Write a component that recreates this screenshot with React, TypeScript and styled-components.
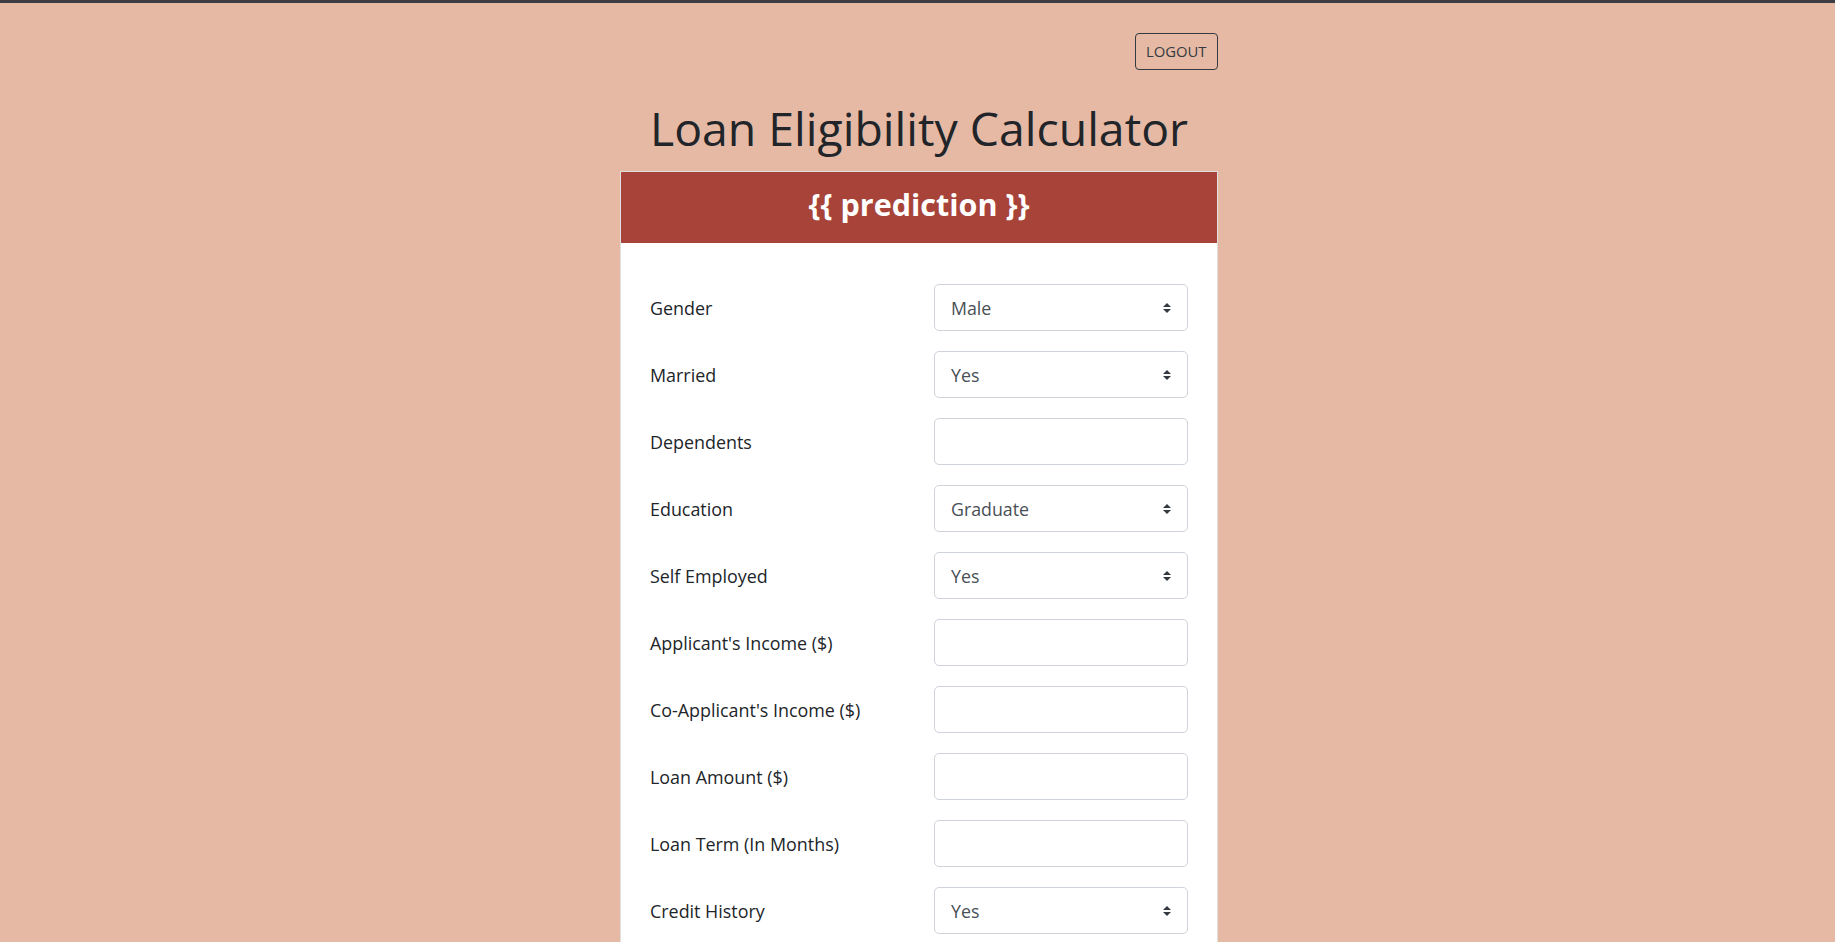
import React from "react";
import styled, { createGlobalStyle } from "styled-components";

const GlobalStyle = createGlobalStyle`
  html, body {
    margin: 0;
    padding: 0;
  }
  body {
    background: #e6b9a4;
    font-family: "Open Sans", "Noto Sans", Arial, sans-serif;
    color: #212529;
  }
  * { box-sizing: border-box; }
`;

const TopStrip = styled.div`
  height: 3px;
  background: #3b3d42;
`;

const Page = styled.main`
  width: 601px;
  padding-left: 3px;
  margin: 0 auto;
  display: flex;
  flex-direction: column;
`;

const HeaderBar = styled.div`
  display: flex;
  justify-content: flex-end;
  padding-top: 30px;
`;

const LogoutButton = styled.button`
  font-family: inherit;
  font-size: 14.8px;
  line-height: 23px;
  padding: 6px 10.5px;
  color: #343a40;
  background: transparent;
  border: 1px solid #343a40;
  border-radius: 4px;
  cursor: pointer;
`;

const Title = styled.h1`
  margin: 31px 0 15px;
  font-size: 46.4px;
  line-height: 55px;
  font-weight: 400;
  text-align: center;
  color: #212529;
`;

const Card = styled.section`
  background: #fff;
  border: 1px solid rgba(0, 0, 0, 0.125);
  display: flex;
  flex-direction: column;
`;

const CardHeader = styled.div`
  background: #a84339;
  color: #fff;
  text-align: center;
  font-size: 30.5px;
  font-weight: 700;
  line-height: 41px;
  padding: 12px 0 18px;
`;

const Form = styled.form`
  padding: 41px 29px 30px;
  display: flex;
  flex-direction: column;
  gap: 20px;
`;

const FieldRow = styled.div`
  display: grid;
  grid-template-columns: 1fr 1fr;
  column-gap: 30px;
  align-items: center;
`;

const Label = styled.label`
  font-size: 17.9px;
  color: #212529;
`;

const controlBase = `
  width: 100%;
  height: 47px;
  font-family: inherit;
  font-size: 17.8px;
  color: #495057;
  background-color: #fff;
  border: 1px solid #ced4da;
  border-radius: 5px;
  padding: 0 16px;
  outline: none;
`;

const Select = styled.select`
  ${controlBase}
  appearance: none;
  -webkit-appearance: none;
  padding-right: 36px;
  background-image: url("data:image/svg+xml,%3csvg xmlns='http://www.w3.org/2000/svg' width='4' height='5' viewBox='0 0 4 5'%3e%3cpath fill='%23343a40' d='M2 0L0 2h4zm0 5L0 3h4z'/%3e%3c/svg%3e");
  background-repeat: no-repeat;
  background-position: right 16px center;
  background-size: 8px 10px;
`;

const Input = styled.input`
  ${controlBase}
`;

const SubmitButton = styled.button`
  font-family: inherit;
  font-size: 17px;
  padding: 8px 20px;
  color: #fff;
  background: #a84339;
  border: none;
  border-radius: 4px;
  align-self: center;
`;

type Field =
  | { label: string; kind: "select"; options: string[] }
  | { label: string; kind: "input" };

const fields: Field[] = [
  { label: "Gender", kind: "select", options: ["Male", "Female"] },
  { label: "Married", kind: "select", options: ["Yes", "No"] },
  { label: "Dependents", kind: "input" },
  { label: "Education", kind: "select", options: ["Graduate", "Not Graduate"] },
  { label: "Self Employed", kind: "select", options: ["Yes", "No"] },
  { label: "Applicant's Income ($)", kind: "input" },
  { label: "Co-Applicant's Income ($)", kind: "input" },
  { label: "Loan Amount ($)", kind: "input" },
  { label: "Loan Term (In Months)", kind: "input" },
  { label: "Credit History", kind: "select", options: ["Yes", "No"] },
  { label: "Property Area", kind: "select", options: ["Urban", "Semiurban", "Rural"] },
];

export default function App() {
  return (
    <>
      <GlobalStyle />
      <TopStrip />
      <Page>
        <HeaderBar>
          <LogoutButton type="button">LOGOUT</LogoutButton>
        </HeaderBar>
        <Title>Loan Eligibility Calculator</Title>
        <Card>
          <CardHeader>{"{{ prediction }}"}</CardHeader>
          <Form onSubmit={(e) => e.preventDefault()}>
            {fields.map((f, i) => (
              <FieldRow key={f.label}>
                <Label htmlFor={`f${i}`}>{f.label}</Label>
                {f.kind === "select" ? (
                  <Select id={`f${i}`} defaultValue={f.options[0]}>
                    {f.options.map((o) => (
                      <option key={o}>{o}</option>
                    ))}
                  </Select>
                ) : (
                  <Input id={`f${i}`} type="text" />
                )}
              </FieldRow>
            ))}
            <SubmitButton type="submit">Predict</SubmitButton>
          </Form>
        </Card>
      </Page>
    </>
  );
}
